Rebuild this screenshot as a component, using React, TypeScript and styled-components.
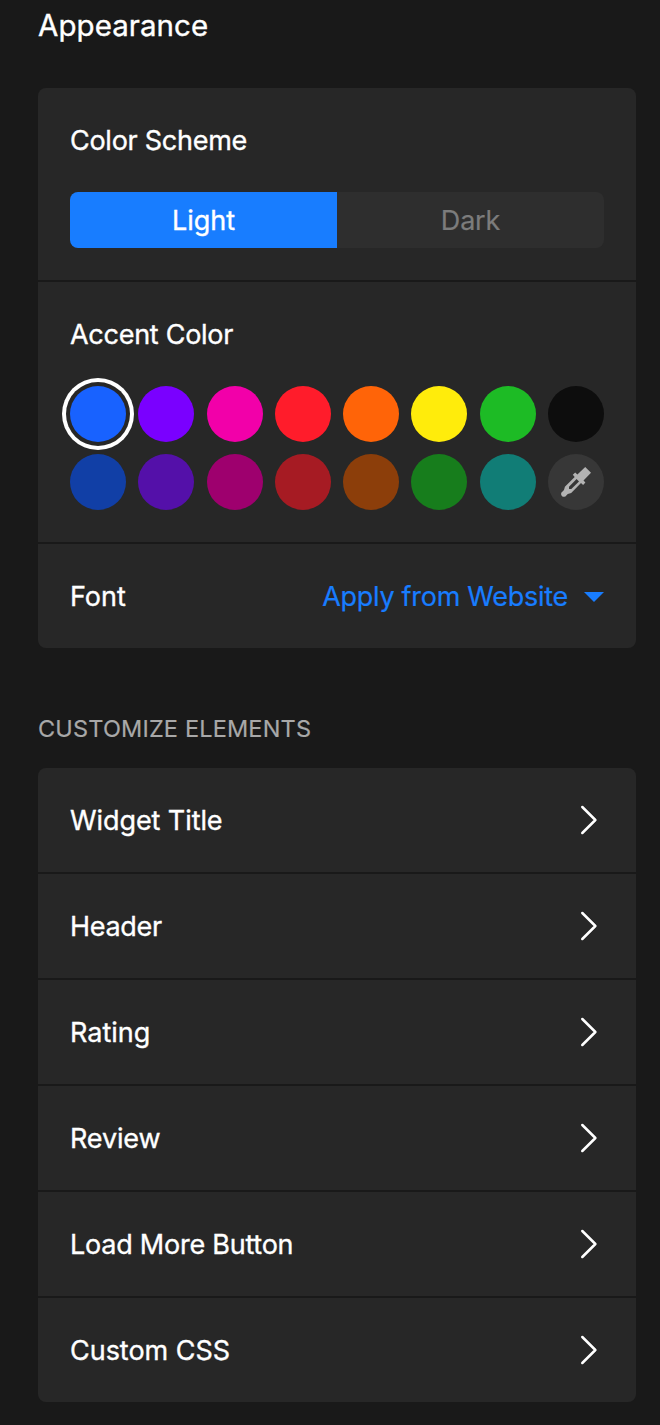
import React from "react";
import styled, { createGlobalStyle } from "styled-components";

const GlobalStyle = createGlobalStyle`
  *, *::before, *::after { box-sizing: border-box; }
  body {
    margin: 0;
    background: #191919;
    color: #fff;
    font-family: Inter, "Liberation Sans", sans-serif;
    font-size: 27px;
    font-weight: 400;
    line-height: 34px;
    -webkit-font-smoothing: antialiased;
  }
  button { font: inherit; color: inherit; border: 0; margin: 0; padding: 0; cursor: pointer; }
`;

const Page = styled.main`
  display: flex;
  flex-direction: column;
  min-height: 1425px;
  padding: 6px 24px 0 38px;
`;

const Title = styled.h1`
  margin: 0 0 44px;
  font-size: 29.5px;
  line-height: 38px;
  font-weight: 400;
`;

const Card = styled.section`
  display: flex;
  flex-direction: column;
  gap: 2px;
  border-radius: 8px;
  overflow: hidden;
`;

const Panel = styled.div`
  display: flex;
  flex-direction: column;
  gap: 34px;
  padding: 36px 32px 32px;
  background: #272727;
`;

const Row = styled.div`
  display: flex;
  align-items: center;
  justify-content: space-between;
  height: 104px;
  padding: 2px 32px 0;
  background: #272727;
`;

const LinkRow = styled.button`
  display: flex;
  align-items: center;
  justify-content: space-between;
  height: 104px;
  padding: 0 38px 0 32px !important;
  background: #272727;

  > span { padding-top: 2px; }
`;

const Label = styled.span<{ $spacing?: number; $stroke?: number }>`
  letter-spacing: ${(p) => p.$spacing ?? 0}px;
  -webkit-text-stroke: ${(p) => p.$stroke ?? 0.35}px currentColor;
  white-space: nowrap;
`;

const Segmented = styled.div`
  display: grid;
  grid-template-columns: 1fr 1fr;
  height: 56px;
  border-radius: 8px;
  overflow: hidden;
`;

const Segment = styled.button<{ $active?: boolean }>`
  padding-top: 2px !important;
  background: ${(p) => (p.$active ? "#187dff" : "#2e2e2e")};
  color: ${(p) => (p.$active ? "#fff" : "#7c7c7c")};
`;

const Swatches = styled.div`
  display: grid;
  grid-template-columns: repeat(8, 56px);
  justify-content: space-between;
  row-gap: 12px;
`;

const Swatch = styled.button<{ $color: string; $selected?: boolean }>`
  display: flex;
  align-items: center;
  justify-content: center;
  width: 56px;
  height: 56px;
  border-radius: 50%;
  background: ${(p) => p.$color};
  box-shadow: ${(p) => (p.$selected ? "0 0 0 4px #272727, 0 0 0 8px #fff" : "none")};
`;

const Select = styled.button`
  display: flex;
  align-items: center;
  gap: 16px;
  background: none;
  color: #187dff;
`;

const SectionTitle = styled.h2`
  margin: 64px 0 23px;
  font-size: 23.5px;
  line-height: 33px;
  font-weight: 400;
  color: #a8a8a8;
`;

const colors = [
  "#1862ff", "#7a00ff", "#f200a9", "#ff1c2b", "#ff6408", "#ffec0b", "#1dbb25", "#0d0d0d",
  "#113fa6", "#5410a9", "#9e006e", "#a61b23", "#8c3e0a", "#177d1c", "#117d76",
];

const elements = [
  { name: "Widget Title", spacing: -0.08 },
  { name: "Header", spacing: -0.3 },
  { name: "Rating", spacing: 0 },
  { name: "Review", spacing: -0.15 },
  { name: "Load More Button", spacing: -0.24 },
  { name: "Custom CSS", spacing: -0.03 },
];

const Chevron = () => (
  <svg width="18" height="30" viewBox="0 0 18 30" fill="none" stroke="#fff" strokeWidth="2.5" strokeLinecap="round" strokeLinejoin="round">
    <path d="M2.3 2 15.4 15 2.3 28" />
  </svg>
);

const Dropper = () => (
  <svg width="30" height="30" viewBox="0 0 30 30" fill="#b3b3b3">
    <path fillRule="evenodd" d="M24.2 0 30 5.8 22.5 13.5 24.4 15.6 22.1 18 20 16.1 10.2 26 6.8 26.9 5.3 28.5A2.7 2.7 0 0 1 0.9 28.9 2.7 2.7 0 0 1 1.3 24.7L3 23 3.9 19.8 13.7 9.9 11.8 7.8 14.2 5.5 16.4 7.5ZM15.6 12 8 19.7V22H10.3L18 14.4Z" />
  </svg>
);

const Caret = () => (
  <svg width="20" height="10" viewBox="0 0 20 10" fill="#187dff">
    <path d="M0 0h20L10 10z" />
  </svg>
);

export default function App() {
  return (
    <>
      <GlobalStyle />
      <Page>
        <Title>
          <Label $spacing={0.05}>Appearance</Label>
        </Title>
        <Card>
          <Panel>
            <Label $spacing={-0.27}>Color Scheme</Label>
            <Segmented>
              <Segment $active><Label>Light</Label></Segment>
              <Segment><Label $spacing={-0.2} $stroke={0.2}>Dark</Label></Segment>
            </Segmented>
          </Panel>
          <Panel>
            <Label $spacing={-0.27}>Accent Color</Label>
            <Swatches>
              {colors.map((color, i) => (
                <Swatch key={color} $color={color} $selected={i === 0} aria-label={color} />
              ))}
              <Swatch $color="#373737" aria-label="Custom color"><Dropper /></Swatch>
            </Swatches>
          </Panel>
          <Row>
            <Label>Font</Label>
            <Select>
              <Label $spacing={-0.28} $stroke={0.2}>Apply from Website</Label>
              <Caret />
            </Select>
          </Row>
        </Card>
        <SectionTitle><Label $spacing={0.17} $stroke={0.2}>CUSTOMIZE ELEMENTS</Label></SectionTitle>
        <Card>
          {elements.map((e) => (
            <LinkRow key={e.name}>
              <Label $spacing={e.spacing}>{e.name}</Label>
              <Chevron />
            </LinkRow>
          ))}
        </Card>
      </Page>
    </>
  );
}
